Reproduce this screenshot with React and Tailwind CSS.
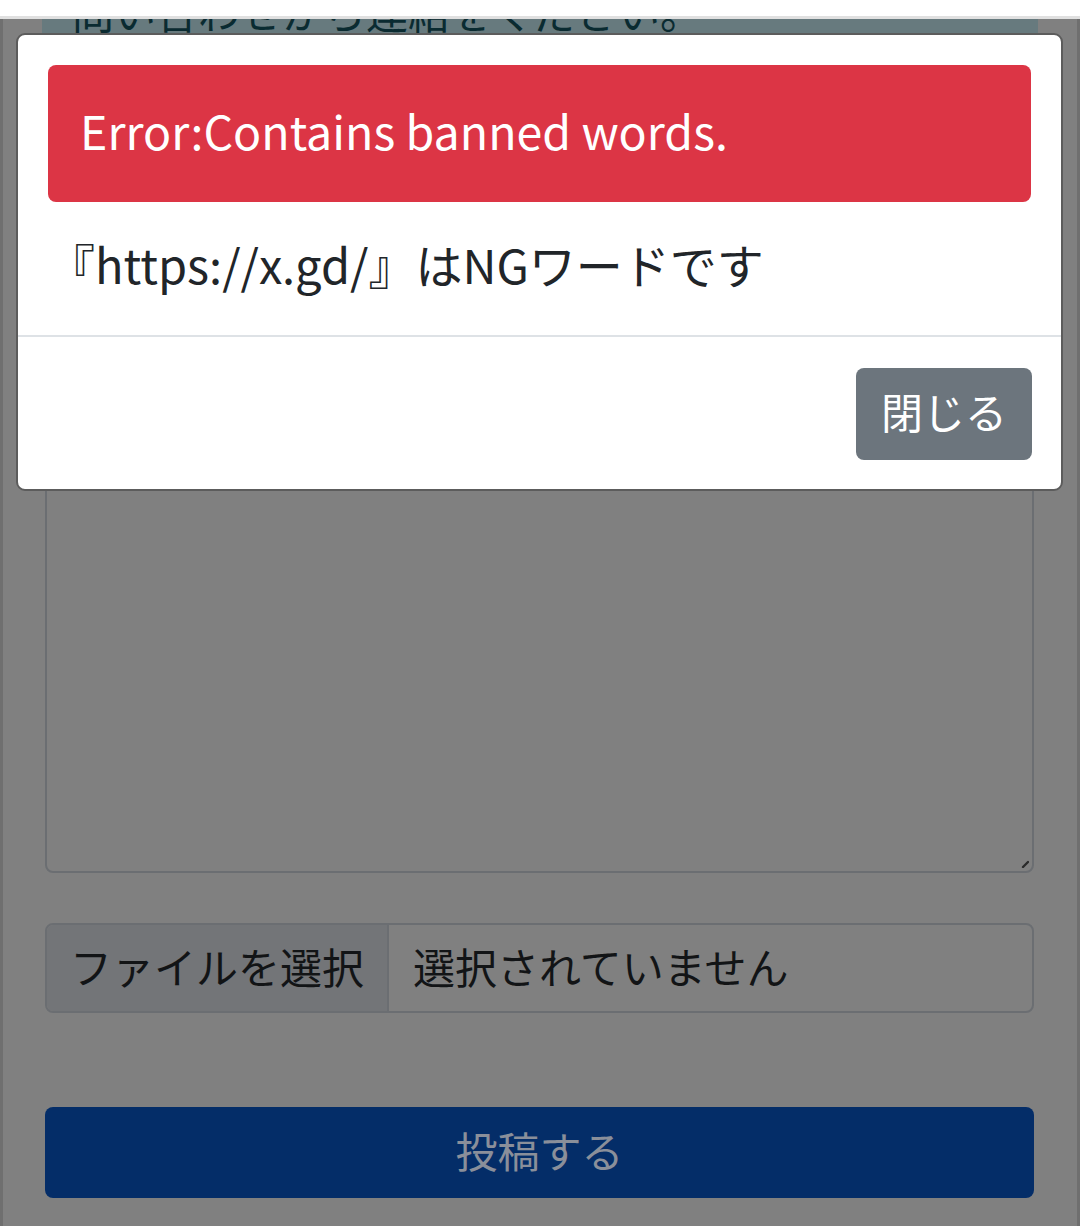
import React from "react";

const jp = { fontFamily: '"Noto Sans CJK JP", "Noto Sans", sans-serif' };

export default function App() {
  return (
    <div className="relative w-[1080px] h-[1226px] overflow-hidden bg-white" style={jp}>
      {/* top chrome strip */}
      <div className="h-[16px] bg-white" />
      <div className="h-[3px] bg-[#e0e0e0]" />

      {/* page under the backdrop */}
      <div className="h-[1207px] bg-[#808080] border-l-[3px] border-r-[3px] border-[#6f6f6f] overflow-hidden">
        <div className="pl-[39px] pr-[39px]">
          {/* info alert (mostly hidden behind modal) */}
          <div className="mt-[-40px] bg-[#677a7e] text-[#0a2b31] text-[42px] leading-[63px] px-[30px] pb-[30px] rounded-[8px]">
            問い合わせから連絡をください。
          </div>
        </div>
        <div className="pl-[42px] pr-[43px]">
          {/* textarea */}
          <div className="relative mt-[221px] h-[580px] border-2 border-[#6b6e72] rounded-[8px]">
            <svg className="absolute right-[3px] bottom-[3px]" width="8" height="8" viewBox="0 0 8 8">
              <path d="M2 7 L7 2" stroke="#2a2a2a" strokeWidth="2.4" strokeLinecap="round" />
            </svg>
          </div>
          {/* file input */}
          <div className="mt-[50px] h-[90px] flex border-2 border-[#6b6e72] rounded-[8px] overflow-hidden text-[42px] text-[#121416]">
            <div className="w-[342px] bg-[#737578] border-r-2 border-[#6b6e72] flex items-center justify-center pb-[6px]">
              ファイルを選択
            </div>
            <div className="flex-1 flex items-center pl-[24px] pb-[6px]">選択されていません</div>
          </div>
          {/* submit */}
          <div className="mt-[94px] h-[91px] bg-[#042d68] rounded-[8px] flex items-center justify-center pb-[6px] text-[42px] text-[#8a8f9a]">
            投稿する
          </div>
        </div>
      </div>

      {/* modal */}
      <div className="absolute left-[16px] top-[33px] w-[1047px] h-[458px] bg-white border-2 border-[#5c5c5c] rounded-[9px] flex flex-col">
        <div className="px-[30px] pt-[30px] flex-1">
          <div className="h-[137px] bg-[#dc3545] rounded-[8px] flex items-center px-[32px] pb-[7px] text-white text-[46.5px]">
            Error:Contains banned words.
          </div>
          <div className="mt-[30px] text-[47px] leading-[63px] text-[#212529]">『https://x.gd/』はNGワードです</div>
        </div>
        <div className="h-[154px] border-t-2 border-[#dee2e6] flex items-start justify-end pt-[31px] pr-[29px]">
          <div className="h-[92px] px-[25px] pb-[7px] bg-[#6c757d] rounded-[8px] flex items-center text-white text-[42px]">
            閉じる
          </div>
        </div>
      </div>
    </div>
  );
}
